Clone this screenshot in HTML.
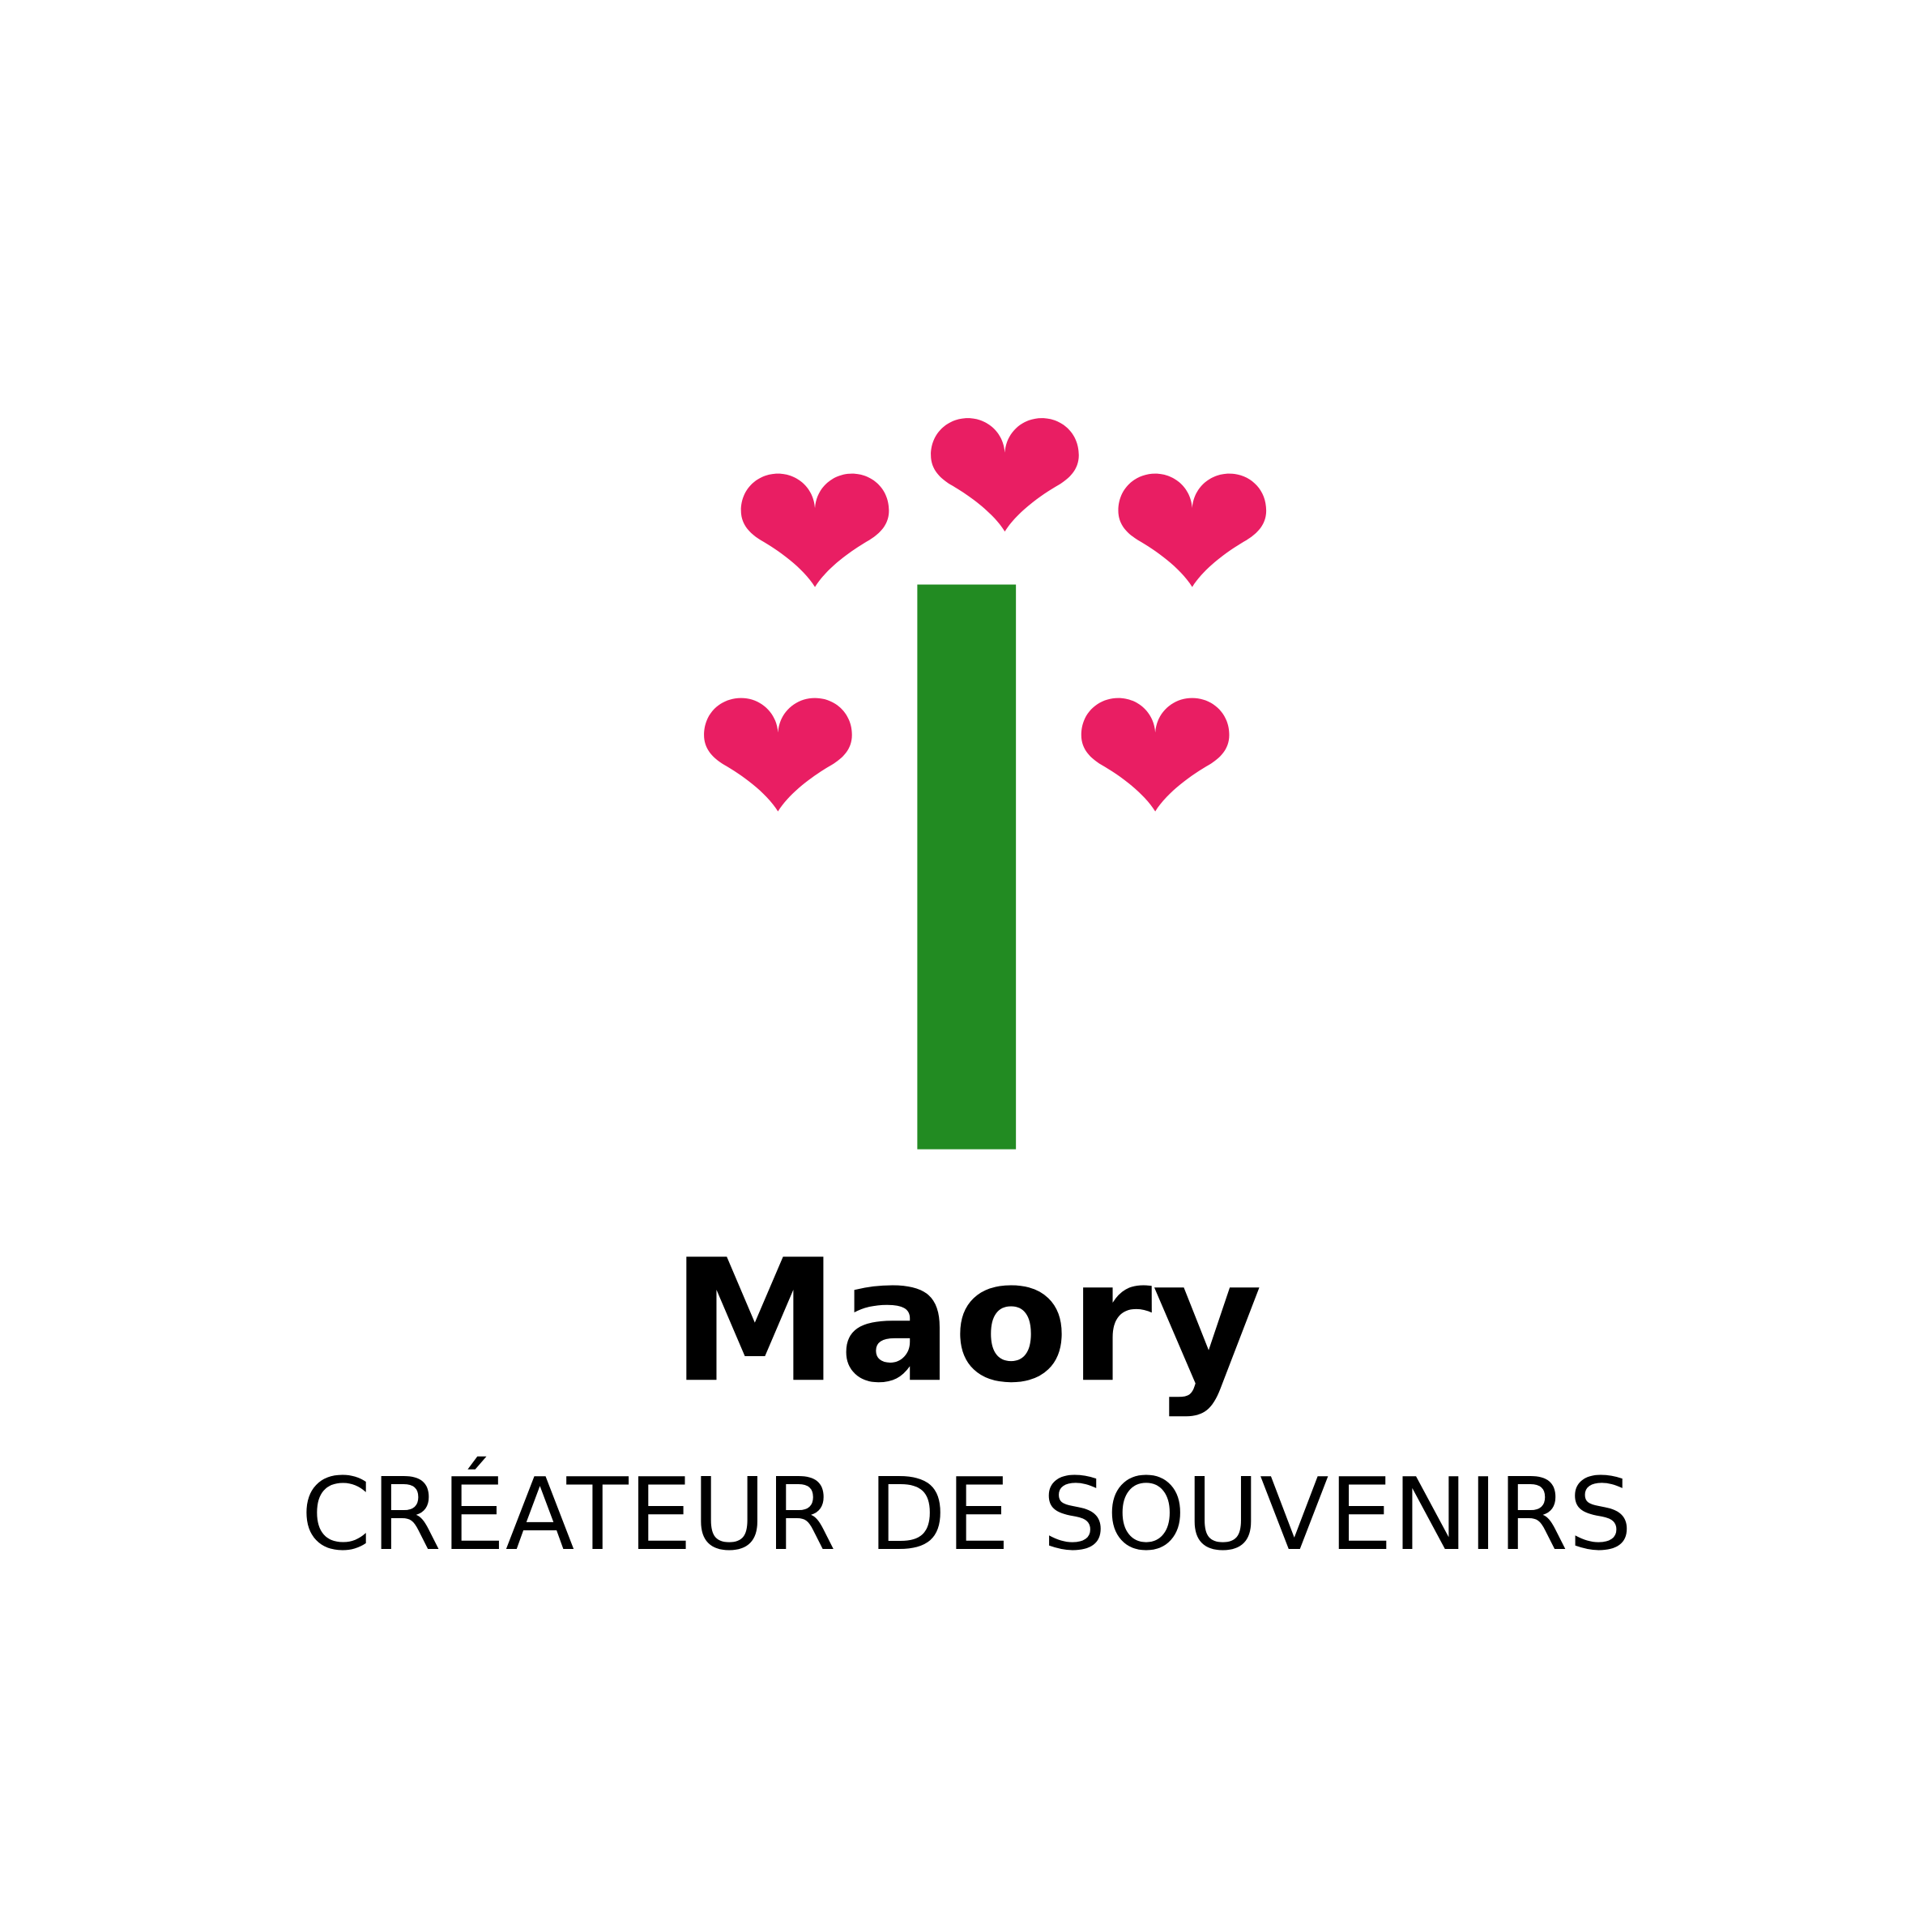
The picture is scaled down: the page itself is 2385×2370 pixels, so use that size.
<!DOCTYPE html>
<html><head><meta charset="utf-8"><style>
html,body{margin:0;padding:0;background:#fff;}
svg{display:block;}
</style></head><body>
<svg width="2385" height="2370" viewBox="0 0 1567 1557" xmlns="http://www.w3.org/2000/svg">
<defs>
<path id="h" d="M0,28 C-1,12 -14,0 -30,0 C-46,0 -60,12 -60,30 C-60,42 -52,49 -44,54 C-30,62 -10,76 0,92 C10,76 30,62 44,54 C52,49 60,42 60,30 C60,12 46,0 30,0 C14,0 1,12 0,28 Z" fill="#e91e63"/>
</defs>
<rect x="744" y="474" width="80" height="458" fill="#228b22"/>
<use href="#h" transform="translate(815,339)"/>
<use href="#h" transform="translate(661,384)"/>
<use href="#h" transform="translate(967,384)"/>
<use href="#h" transform="translate(631,566)"/>
<use href="#h" transform="translate(937,566)"/>
<text x="784" y="1119" text-anchor="middle" font-family="DejaVu Sans, sans-serif" font-weight="bold" font-size="137">Maory</text>
<text x="244" y="1256" textLength="1080" lengthAdjust="spacingAndGlyphs" font-family="DejaVu Sans, sans-serif" font-size="81">CRÉATEUR DE SOUVENIRS</text>
</svg>
</body></html>
